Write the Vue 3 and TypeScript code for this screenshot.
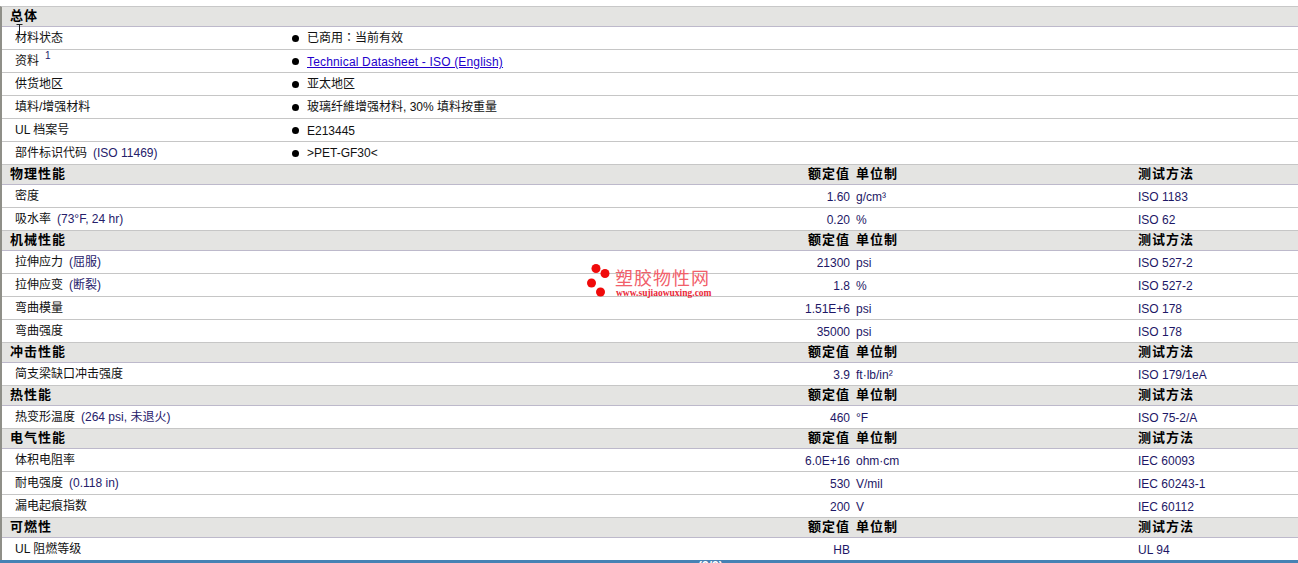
<script setup lang="ts">
interface Row { label: string; note?: string; sup?: string; value?: string; unit?: string; method?: string; bullet?: string; link?: boolean; tc?: boolean; low?: boolean }
interface Section { title: string; cols: boolean; rows: Row[] }

const sections: Section[] = [
  { title: '总体', cols: false, rows: [
    { label: '材料状态', bullet: '已商用：当前有效', tc: true },
    { label: '资料', sup: '1', bullet: 'Technical Datasheet - ISO (English)', link: true, low: true },
    { label: '供货地区', bullet: '亚太地区' },
    { label: '填料/增强材料', bullet: '玻璃纤維增强材料, 30% 填料按重量' },
    { label: 'UL 档案号', bullet: 'E213445', low: true },
    { label: '部件标识代码', note: '(ISO 11469)', bullet: '>PET-GF30<' },
  ] },
  { title: '物理性能', cols: true, rows: [
    { label: '密度', value: '1.60', unit: 'g/cm³', method: 'ISO 1183' },
    { label: '吸水率', note: '(73°F, 24 hr)', value: '0.20', unit: '%', method: 'ISO 62' },
  ] },
  { title: '机械性能', cols: true, rows: [
    { label: '拉伸应力', note: '(屈服)', value: '21300', unit: 'psi', method: 'ISO 527-2' },
    { label: '拉伸应变', note: '(断裂)', value: '1.8', unit: '%', method: 'ISO 527-2' },
    { label: '弯曲模量', value: '1.51E+6', unit: 'psi', method: 'ISO 178' },
    { label: '弯曲强度', value: '35000', unit: 'psi', method: 'ISO 178' },
  ] },
  { title: '冲击性能', cols: true, rows: [
    { label: '简支梁缺口冲击强度', value: '3.9', unit: 'ft·lb/in²', method: 'ISO 179/1eA' },
  ] },
  { title: '热性能', cols: true, rows: [
    { label: '热变形温度', note: '(264 psi, 未退火)', value: '460', unit: '°F', method: 'ISO 75-2/A' },
  ] },
  { title: '电气性能', cols: true, rows: [
    { label: '体积电阻率', value: '6.0E+16', unit: 'ohm·cm', method: 'IEC 60093' },
    { label: '耐电强度', note: '(0.118 in)', value: '530', unit: 'V/mil', method: 'IEC 60243-1' },
    { label: '漏电起痕指数', value: '200', unit: 'V', method: 'IEC 60112' },
  ] },
  { title: '可燃性', cols: true, rows: [
    { label: 'UL 阻燃等级', value: 'HB', unit: '', method: 'UL 94' },
  ] },
]
</script>

<template>
  <div class="page">
    <div class="sheet">
      <template v-for="s in sections" :key="s.title">
        <div class="row head">
          <div class="title">{{ s.title }}</div>
          <template v-if="s.cols">
            <div class="val">额定值</div>
            <div class="unit">单位制</div>
            <div class="method">测试方法</div>
          </template>
        </div>
        <div v-for="r in s.rows" :key="r.label" class="row body">
          <div class="label">
            {{ r.label }}<sup v-if="r.sup" class="sup">{{ r.sup }}</sup><span v-if="r.note" class="note">{{ r.note }}</span>
          </div>
          <div v-if="r.bullet" class="bullet">
            <i class="dot"></i>
            <a v-if="r.link" class="link low" href="#">{{ r.bullet }}</a>
            <span v-else :class="{ tc: r.tc, low: r.low }">{{ r.bullet }}</span>
          </div>
          <template v-else>
            <div class="val">{{ r.value }}</div>
            <div class="unit">{{ r.unit }}</div>
            <div class="method">{{ r.method }}</div>
          </template>
        </div>
      </template>
    </div>
    <div class="bar"><span class="bar-text">(3/3)</span></div>

    <svg class="cursor" width="9" height="11" viewBox="0 0 9 11">
      <path d="M1.500 .5h6M4.500 .5v10" fill="none" stroke="#222" stroke-width="1" />
    </svg>
    <div class="mark">
      <svg class="dots" width="24" height="34" viewBox="0 0 24 34">
        <circle cx="9" cy="4.500" r="4.500" fill="#f00a0a" />
        <circle cx="18" cy="9.500" r="4.500" fill="#f00a0a" />
        <circle cx="4.500" cy="19" r="4.500" fill="#f00a0a" />
        <circle cx="13.500" cy="28" r="4.500" fill="#f00a0a" />
      </svg>
      <div class="mark-text">
        <div class="mark-cn">塑胶物性网</div>
        <div class="mark-en">www.sujiaowuxing.com</div>
      </div>
    </div>
  </div>
</template>

<style>
html, body { margin: 0; background: #fff; overflow: hidden; }
</style>

<style scoped>
.page {
  position: relative;
  width: 1298px;
  height: 563px;
  overflow: hidden;
  background: #fff;
  box-sizing: border-box;
  padding-top: 6px;
  font: 12px/16px "Liberation Sans", "Noto Sans CJK SC", sans-serif;
  color: #111;
}
.sheet {
  height: 554px;
  border-left: 2px solid #8f8f88;
  border-top: 1px solid #c8c8c8;
  box-sizing: border-box;
}
.row {
  display: grid;
  grid-template-columns: 290px 558px 288px 1fr;
  grid-template-rows: 1fr;
  box-sizing: border-box;
  align-items: center;
}
.row > * { grid-row: 1; }
.head {
  height: 20px;
  padding-bottom: 2px;
  background: #e4e4e2;
  border-bottom: 1px solid #bdb9cb;
  font-weight: 700;
  font-size: 13px;
  color: #000;
}
.body {
  height: 23px;
  background: #fff;
  border-bottom: 1px solid #c6c6c6;
}
.title { grid-column: 1; padding-left: 8px; letter-spacing: 1px; }
.label { grid-column: 1; padding-left: 13px; white-space: nowrap; }
.note { margin-left: 6px; color: #26206a; }
.sup { font-size: 10px; line-height: 0; margin-left: 6px; vertical-align: 6px; color: #26206a; }
.bullet {
  grid-column: 2 / 5;
  display: flex;
  align-items: center;
  gap: 8px;
  white-space: nowrap;
}
.low { padding-top: 2px; }
.tc { font-family: "Liberation Sans", "Noto Sans CJK TC", sans-serif; }
.dot {
  width: 7px;
  height: 7px;
  border-radius: 50%;
  background: #000;
}
.link { color: #2200cc; text-decoration: underline; letter-spacing: 0.17px; }
.val { grid-column: 2; text-align: right; }
.unit { grid-column: 3; padding-left: 6px; white-space: nowrap; }
.method { grid-column: 4; white-space: nowrap; }
.body .val, .body .unit, .body .method { color: #1d1766; padding-top: 2px; }
.head .val, .head .unit, .head .method { letter-spacing: 1px; }
.head .val { margin-right: 0; }
.bar {
  height: 3px;
  background: #4682b4;
  overflow: hidden;
  position: relative;
}
.bar-text {
  position: absolute;
  left: 698px;
  top: 0;
  font-size: 12px;
  line-height: 12px;
  color: #fff;
  font-weight: 700;
}
.cursor { position: absolute; left: 15px; top: 24px; }
.mark {
  position: absolute;
  left: 587px;
  top: 264px;
  display: flex;
  pointer-events: none;
}
.mark-text { margin-left: 4px; margin-top: 6px; }
.mark-cn {
  font-size: 18px;
  line-height: 19px;
  color: #f1606a;
  letter-spacing: 1px;
  white-space: nowrap;
}
.mark-en {
  font: 700 9.500px/9px "Liberation Serif", serif;
  color: #e92a3a;
  white-space: nowrap;
  margin-left: 1px;
}
</style>
